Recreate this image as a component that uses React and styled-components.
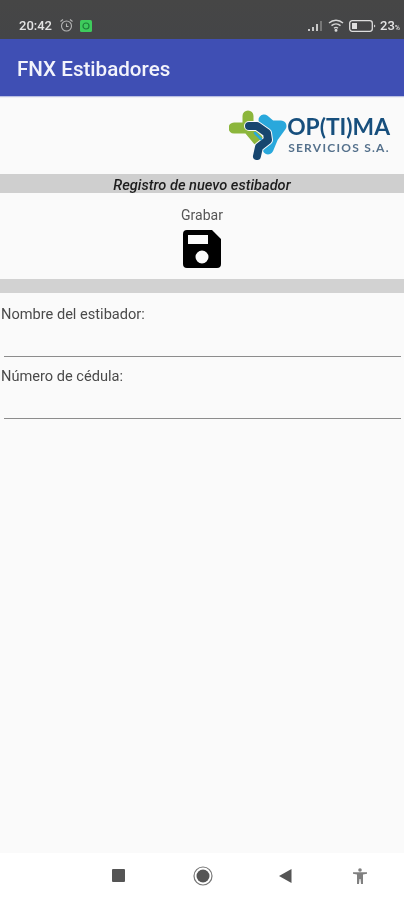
import React from "react";
import styled, { createGlobalStyle } from "styled-components";

const Global = createGlobalStyle`
  html, body { margin: 0; padding: 0; background: #fafafa; }
  body { font-family: Roboto, "Liberation Sans", sans-serif; }
`;
const Screen = styled.div`
  width: 404px; height: 900px; display: flex; flex-direction: column;
  background: #fafafa; overflow: hidden; filter: blur(0.5px);
`;
const StatusBar = styled.div`
  height: 39px; box-sizing: border-box; padding: 12px 4px 0 19px;
  background: linear-gradient(#464646, #444547);
  display: flex; align-items: center; color: #e4e4e4;
`;
const Clock = styled.span`font-size: 13px; font-weight: 500; width: 34px; margin-top: -1px;`;
const StatusLeft = styled.div`display: flex; align-items: center; gap: 6px; flex: 1;`;
const StatusRight = styled.div`display: flex; align-items: center; gap: 4px;`;
const Percent = styled.span`font-size: 13px; font-weight: 500; margin-top: -1px;`;
const PercentSign = styled.span`font-size: 7px;`;
const AppBar = styled.header`
  height: 57px; background: #3f4fb4; display: flex; align-items: center;
  padding: 3px 0 0 17px; box-sizing: border-box;
  color: #f2f3fb; font-size: 20.6px; font-weight: 500;
  box-shadow: 0 1px 1px rgba(63,79,180,.35);
`;
const LogoRow = styled.div`
  height: 78px; display: flex; justify-content: flex-end; align-items: center;
  padding: 0 14px 0 0; box-sizing: border-box;
`;
const LogoText = styled.div`display: flex; flex-direction: column; align-items: flex-start; margin-top: -1px;`;
const LogoTitle = styled.div`
  font-family: Lato, sans-serif; font-weight: 700; font-size: 22.8px; line-height: 22px;
  color: #174f7d;
`;
const LogoSub = styled.div`
  font-family: Lato, sans-serif; font-weight: 700; font-size: 12px; line-height: 13px;
  color: #55718c; letter-spacing: 1.25px; margin: 3.5px 0 0 1px; white-space: pre;
`;
const TitleBand = styled.div`
  height: 19px; box-sizing: border-box; padding-top: 2px;
  background: #cfcfcf; display: flex; align-items: center; justify-content: center;
  font-size: 14.6px; font-weight: 500; font-style: italic; color: #1d1d1d;
`;
const SaveArea = styled.div`
  height: 86px; box-sizing: border-box; padding-top: 14px;
  display: flex; flex-direction: column; align-items: center; gap: 7px;
`;
const SaveLabel = styled.span`font-size: 14px; line-height: 16px; color: #555;`;
const Separator = styled.div`height: 14px; background: #d2d2d2;`;
const Form = styled.div`flex: 1; display: flex; flex-direction: column; padding-top: 13px;`;
const Field = styled.div`height: 62px; display: flex; flex-direction: column;`;
const Label = styled.label`font-size: 14.6px; line-height: 16px; color: #4a4a4a; padding-left: 1px;`;
const Line = styled.div`margin: 34px 3px 0 4px; height: 1px; background: #8c8c8c;`;
const NavBar = styled.nav`
  height: 47px; background: #fff; display: flex; align-items: center;
  padding: 0 0 2px 112px; box-sizing: border-box;
`;
const Nav = styled.span`display: flex; margin-left: ${(p) => p.$gap || 0}px;`;

const Alarm = () => (
  <svg width="15" height="15" viewBox="0 0 15 15" fill="none" stroke="#b5b5b5" strokeWidth="1.1">
    <circle cx="7.5" cy="8" r="5" /><path d="M7.5 5.5V8.5H9.5M1.5 3.5l2.5-2M13.5 3.5l-2.5-2" />
  </svg>
);
const Chat = () => (
  <svg width="12" height="12" viewBox="0 0 12 12">
    <rect width="12" height="12" rx="1.5" fill="#3ecb5c" />
    <circle cx="6" cy="6" r="3" fill="none" stroke="#1e7e3a" strokeWidth="1.2" />
  </svg>
);
const Signal = () => (
  <svg width="16" height="10" viewBox="0 0 16 10">
    <path d="M0 8h2v2H0zM4 6h2v4H4zM8 3h2v7H8z" fill="#c8c8c8" />
    <path d="M12 0h2v10h-2z" fill="#777" />
  </svg>
);
const Wifi = () => (
  <svg width="17" height="13" viewBox="0 0 17 13" fill="none" stroke="#d8d8d8" strokeWidth="1.4">
    <path d="M1 4c4-3.6 10-3.6 14 0M3.5 6.6c2.6-2.2 6.4-2.2 9 0M6 9.2c1.2-1 2.8-1 4 0" />
    <circle cx="8" cy="11.3" r=".8" fill="#d8d8d8" />
  </svg>
);
const Battery = () => (
  <svg width="27" height="12" viewBox="0 0 27 12">
    <rect x=".7" y=".7" width="22.6" height="10.6" rx="2.5" fill="none" stroke="#dedede" strokeWidth="1.3" />
    <rect x="3" y="3" width="5" height="6" fill="#dedede" />
    <path d="M25 4.5l1.5 1.5-1.5 1.5z" fill="#dedede" />
  </svg>
);
const LogoMark = () => (
  <svg width="58" height="53" viewBox="0 0 58 53" fill="none" strokeLinecap="round" strokeLinejoin="round">
    <path d="M5 19H20M19 7V19L29 31" stroke="#8cb63c" strokeWidth="11" />
    <path d="M35 11L42 17H52L44 28L39 40" stroke="#29a8dc" strokeWidth="11" />
    <path d="M20 17H28L38 24L39 31L30 38L28 47" stroke="#fafafa" strokeWidth="10" />
    <path d="M20 17H28L38 24L39 31L30 38L28 47" stroke="#17466f" strokeWidth="8" />
    <path d="M26 24L32 30" stroke="#29a8dc" strokeWidth="2.5" />
  </svg>
);
const Floppy = () => (
  <svg width="38" height="38" viewBox="0 0 38 38">
    <path fillRule="evenodd" fill="#000" d="M4 0H29L38 9V34a4 4 0 0 1-4 4H4a4 4 0 0 1-4-4V4a4 4 0 0 1 4-4ZM5 5V14H25V5ZM19 20.500a6.500 6.500 0 1 0 0 13a6.500 6.500 0 1 0 0-13Z" />
  </svg>
);
const Person = () => (
  <svg width="14" height="16" viewBox="0 0 14 16" fill="#808080">
    <circle cx="7" cy="2" r="1.8" /><path d="M0 4.200h14v1.600l-4 .8V16H8l-.5-5h-1L6 16H4V6.600l-4-.8z" />
  </svg>
);

export default function App() {
  return (
    <Screen>
      <Global />
      <StatusBar>
        <StatusLeft>
          <Clock>20:42</Clock><Alarm /><Chat />
        </StatusLeft>
        <StatusRight>
          <Signal /><Wifi /><Battery /><Percent>23<PercentSign>%</PercentSign></Percent>
        </StatusRight>
      </StatusBar>
      <AppBar>FNX Estibadores</AppBar>
      <LogoRow>
        <LogoMark />
        <LogoText>
          <LogoTitle>OP(TI)MA</LogoTitle>
          <LogoSub>SERVICIOS S.A.</LogoSub>
        </LogoText>
      </LogoRow>
      <TitleBand>Registro de nuevo estibador</TitleBand>
      <SaveArea>
        <SaveLabel>Grabar</SaveLabel>
        <Floppy />
      </SaveArea>
      <Separator />
      <Form>
        <Field><Label>Nombre del estibador:</Label><Line /></Field>
        <Field><Label>Número de cédula:</Label><Line /></Field>
      </Form>
      <NavBar>
        <Nav><svg width="13" height="13" viewBox="0 0 13 13"><rect width="13" height="13" rx="1" fill="#555" /></svg></Nav>
        <Nav $gap={68}><svg width="20" height="20" viewBox="0 0 20 20"><circle cx="10" cy="10" r="9" fill="none" stroke="#777" strokeWidth="1.2" /><circle cx="10" cy="10" r="6.500" fill="#555" /></svg></Nav>
        <Nav $gap={66}><svg width="13" height="14" viewBox="0 0 13 14"><path d="M12.500 0V14L0 7Z" fill="#555" /></svg></Nav>
        <Nav $gap={61}><Person /></Nav>
      </NavBar>
    </Screen>
  );
}
